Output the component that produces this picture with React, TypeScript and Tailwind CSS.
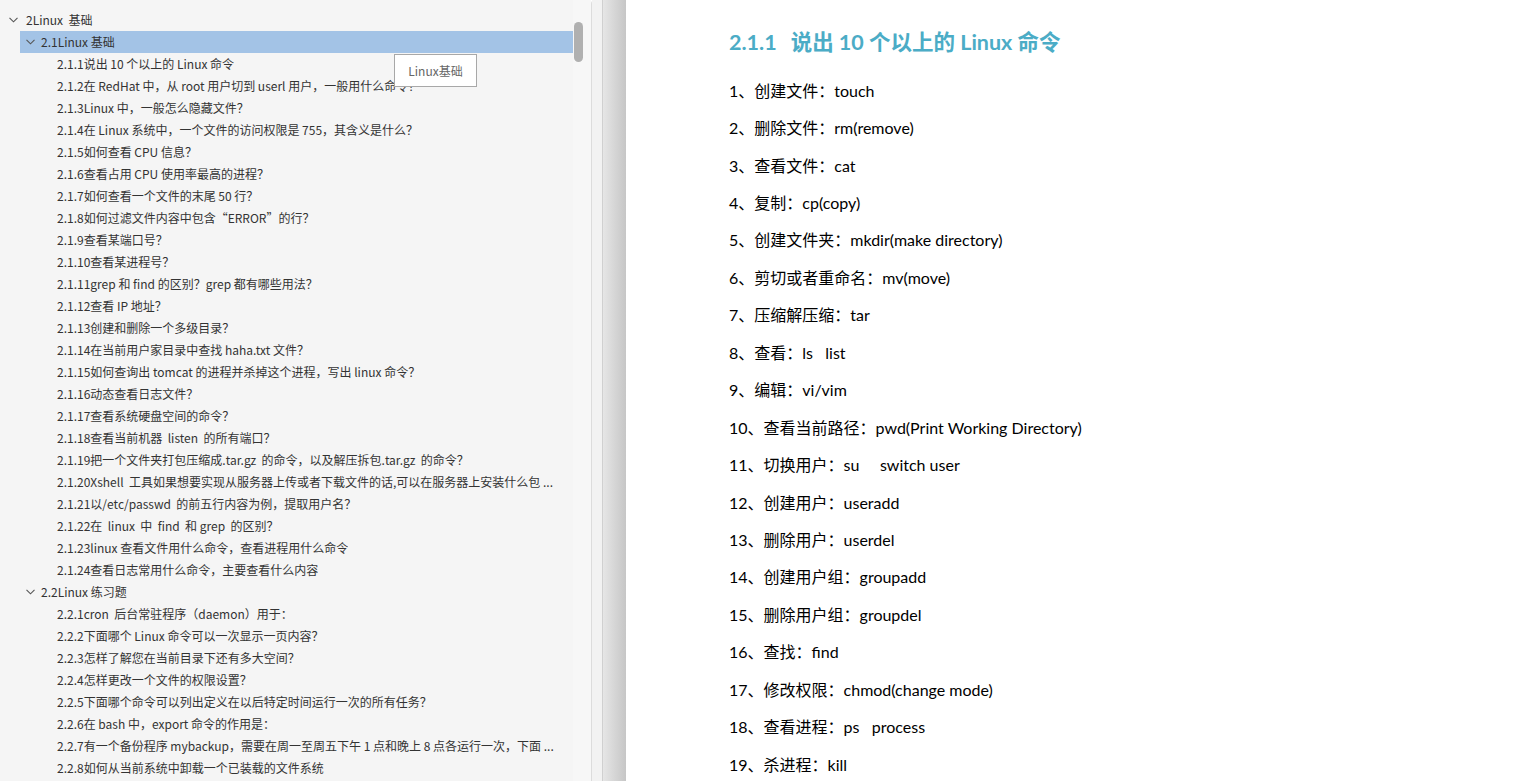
const sideFont = { fontFamily: '"Noto Sans CJK SC", "Noto Sans", sans-serif' };
const docFont = { fontFamily: 'Lato, "Noto Sans CJK SC", sans-serif' };

type Row = { level: number; text: string; open?: boolean; active?: boolean };

const rows: Row[] = [
  { level: 1, text: "2Linux  基础", open: true },
  { level: 2, text: "2.1Linux 基础", open: true, active: true },
  { level: 3, text: "2.1.1说出 10 个以上的 Linux 命令" },
  { level: 3, text: "2.1.2在 RedHat 中，从 root 用户切到 userl 用户，一般用什么命令？" },
  { level: 3, text: "2.1.3Linux 中，一般怎么隐藏文件？" },
  { level: 3, text: "2.1.4在 Linux 系统中，一个文件的访问权限是 755，其含义是什么？" },
  { level: 3, text: "2.1.5如何查看 CPU 信息？" },
  { level: 3, text: "2.1.6查看占用 CPU 使用率最高的进程？" },
  { level: 3, text: "2.1.7如何查看一个文件的末尾 50 行？" },
  { level: 3, text: "2.1.8如何过滤文件内容中包含“ERROR”的行？" },
  { level: 3, text: "2.1.9查看某端口号？" },
  { level: 3, text: "2.1.10查看某进程号？" },
  { level: 3, text: "2.1.11grep 和 find 的区别？grep 都有哪些用法？" },
  { level: 3, text: "2.1.12查看 IP 地址？" },
  { level: 3, text: "2.1.13创建和删除一个多级目录？" },
  { level: 3, text: "2.1.14在当前用户家目录中查找 haha.txt 文件？" },
  { level: 3, text: "2.1.15如何查询出 tomcat 的进程并杀掉这个进程，写出 linux 命令？" },
  { level: 3, text: "2.1.16动态查看日志文件？" },
  { level: 3, text: "2.1.17查看系统硬盘空间的命令？" },
  { level: 3, text: "2.1.18查看当前机器  listen  的所有端口？" },
  { level: 3, text: "2.1.19把一个文件夹打包压缩成.tar.gz  的命令，以及解压拆包.tar.gz  的命令？" },
  { level: 3, text: "2.1.20Xshell  工具如果想要实现从服务器上传或者下载文件的话,可以在服务器上安装什么包 ..." },
  { level: 3, text: "2.1.21以/etc/passwd  的前五行内容为例，提取用户名？" },
  { level: 3, text: "2.1.22在  linux  中  find  和 grep  的区别？" },
  { level: 3, text: "2.1.23linux 查看文件用什么命令，查看进程用什么命令" },
  { level: 3, text: "2.1.24查看日志常用什么命令，主要查看什么内容" },
  { level: 2, text: "2.2Linux 练习题", open: true },
  { level: 3, text: "2.2.1cron  后台常驻程序（daemon）用于：" },
  { level: 3, text: "2.2.2下面哪个 Linux 命令可以一次显示一页内容？" },
  { level: 3, text: "2.2.3怎样了解您在当前目录下还有多大空间？" },
  { level: 3, text: "2.2.4怎样更改一个文件的权限设置？" },
  { level: 3, text: "2.2.5下面哪个命令可以列出定义在以后特定时间运行一次的所有任务？" },
  { level: 3, text: "2.2.6在 bash 中，export 命令的作用是：" },
  { level: 3, text: "2.2.7有一个备份程序 mybackup，需要在周一至周五下午 1 点和晚上 8 点各运行一次，下面 ..." },
  { level: 3, text: "2.2.8如何从当前系统中卸载一个已装载的文件系统" },
];

const commands = [
  "1、创建文件：touch",
  "2、删除文件：rm(remove)",
  "3、查看文件：cat",
  "4、复制：cp(copy)",
  "5、创建文件夹：mkdir(make directory)",
  "6、剪切或者重命名：mv(move)",
  "7、压缩解压缩：tar",
  "8、查看：ls   list",
  "9、编辑：vi/vim",
  "10、查看当前路径：pwd(Print Working Directory)",
  "11、切换用户：su     switch user",
  "12、创建用户：useradd",
  "13、删除用户：userdel",
  "14、创建用户组：groupadd",
  "15、删除用户组：groupdel",
  "16、查找：find",
  "17、修改权限：chmod(change mode)",
  "18、查看进程：ps   process",
  "19、杀进程：kill",
];

const Chevron = () => (
  <svg width="9" height="6" viewBox="0 0 9 6" className="shrink-0">
    <polyline points="0.5,0.8 4.5,4.8 8.5,0.8" fill="none" stroke="#555" strokeWidth="1.1" />
  </svg>
);

const TreeRow = ({ row }: { row: Row }) => {
  if (row.level === 1) {
    return (
      <div className="flex h-[22px] items-center pl-[9px]">
        <Chevron />
        <span className="ml-[8px] whitespace-pre">{row.text}</span>
      </div>
    );
  }
  if (row.level === 2) {
    return (
      <div
        className={`ml-[20px] flex h-[22px] items-center pl-[6px] ${row.active ? "bg-[#a3c3e6]" : ""}`}
      >
        <Chevron />
        <span className="ml-[6px] whitespace-pre">{row.text}</span>
      </div>
    );
  }
  return (
    <div className="flex h-[22px] items-center pl-[57px]">
      <span className="overflow-hidden whitespace-pre">{row.text}</span>
    </div>
  );
};

export default function App() {
  return (
    <div className="relative flex h-[781px] w-[1517px] overflow-hidden bg-white">
      {/* Outline sidebar */}
      <aside
        className="flex h-full w-[592px] shrink-0 rounded-tr-[4px] border-r border-[#dcdcdc] bg-[#f5f5f5] text-[12px] text-[#333]"
        style={sideFont}
      >
        <div className="min-w-0 flex-1 pt-[9px]">
          {rows.map((r, i) => (
            <TreeRow key={i} row={r} />
          ))}
        </div>
        <div className="w-[18px] shrink-0 bg-[#f7f7f7] pt-[22px]">
          <div className="ml-[1px] h-[40px] w-[9px] rounded-full bg-[#b0b0b0]" />
        </div>
      </aside>

      {/* Splitter */}
      <div className="h-full w-[10px] shrink-0 bg-[#f2f2f2]" />
      <div className="h-full w-[24px] shrink-0 border-l border-[#d0d0d0] bg-gradient-to-r from-[#e6e6e6] to-[#c6c6c6]" />

      {/* Document */}
      <main className="flex-1 bg-white pl-[103px] pt-[28px] text-black" style={docFont}>
        <h2 className="flex h-[28px] items-center whitespace-pre text-[21.5px] font-bold leading-[28px] text-[#4bacc6]">
          <span>2.1.1</span>
          <span className="ml-[14px]">说出 10 个以上的 Linux 命令</span>
        </h2>
        <div className="mt-[16px]">
          {commands.map((c, i) => (
            <div key={i} className="flex h-[37.45px] items-center whitespace-pre text-[16px]">
              {c}
            </div>
          ))}
        </div>
      </main>

      {/* Tooltip */}
      <div
        className="absolute left-[394px] top-[54px] flex h-[33px] w-[83px] items-center justify-center border border-[#a8a8a8] bg-white text-[12px] text-[#666]"
        style={sideFont}
      >
        Linux基础
      </div>
    </div>
  );
}
